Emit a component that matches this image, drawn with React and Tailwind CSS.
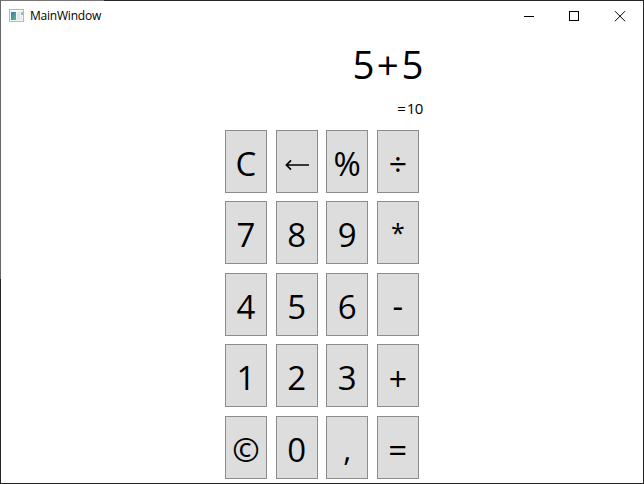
const ROWS = [
  ['C', '←', '%', '÷'],
  ['7', '8', '9', '*'],
  ['4', '5', '6', '-'],
  ['1', '2', '3', '+'],
  ['©', '0', ',', '='],
];

// Optical corrections for glyphs whose shape differs from the digits
const ADJUST = {
  '*': 'text-[25px] -mt-[2px]',
  '÷': 'text-[32px]',
  '-': 'mt-[-1px]',
  '+': 'text-[32px] mt-[1px]',
  ',': 'text-[31px]',
};

function ArrowLeft() {
  return (
    <svg className="mt-[2px]" width="24" height="14" viewBox="0 0 24 14" fill="none" stroke="#000" strokeWidth="1.7">
      <path d="M1.2 7H24M6 2.4L1.4 7L6 11.6" />
    </svg>
  );
}

function Key({ label }) {
  return (
    <button className="flex h-[63px] w-[42px] justify-center border border-[#8c8c8c] bg-[#dddddd] pt-[10px] text-[33px] leading-[45px] text-black">
      {label === '←' ? <span className="flex h-[45px] items-center"><ArrowLeft /></span> : <span className={ADJUST[label]}>{label}</span>}
    </button>
  );
}

function TitleBar() {
  return (
    <header className="flex h-[30px] items-center justify-between">
      <div className="flex items-center">
        <svg className="-mt-[2px] ml-[8px]" width="15" height="13" viewBox="0 0 15 13">
          <rect x=".5" y=".5" width="14" height="12" fill="#f4f5f6" stroke="#b4b9bd" />
          <rect x="2" y="3" width="5" height="8" fill="#4f95a0" />
          <path d="M2 3h4l-4 5z" fill="#4a7fb5" />
          <path d="M7 5v6H3z" fill="#58aa86" />
          <rect x="8" y="3" width="3" height="8" fill="#e2e5e7" />
          <rect x="12" y="3" width="2" height="3" fill="#8fc3a6" />
          <rect x="12" y="7" width="1" height="4" fill="#dde3e4" />
        </svg>
        <span className="ml-[6px] text-[12px] leading-4 tracking-[-0.22px]">MainWindow</span>
      </div>
      <div className="-mr-[1px] flex">
        <svg width="46" height="29" fill="none" stroke="#000" shapeRendering="crispEdges"><path d="M18 14.5h10" /></svg>
        <svg width="46" height="29" fill="none" stroke="#000" shapeRendering="crispEdges"><rect x="17.5" y="9.5" width="9" height="9" /></svg>
        <svg width="46" height="29" fill="none" stroke="#000"><path d="M17 9.2l10 10M27 9.2l-10 10" /></svg>
      </div>
    </header>
  );
}

// Lighter stretch of the translucent window frame at the top left corner
function FrameTint() {
  return (
    <>
      <div className="absolute -top-px -left-px h-px w-[104px] bg-[#767476]" />
      <div className="absolute -top-px -left-px h-[279px] w-px bg-[#66676a]" />
    </>
  );
}

export default function App() {
  return (
    <div className="relative flex h-[484px] w-[644px] flex-col border border-[#232323] bg-white font-['Open_Sans','Noto_Sans',sans-serif] text-black">
      <FrameTint />
      <TitleBar />
      <main className="ml-[224px] w-[198px]">
        <div className="mt-[6px] flex h-[54px] justify-end text-[38.5px] leading-[54px]">
          <span className="w-[21.5px] text-center">5</span>
          <span className="w-[27.4px] text-center">+</span>
          <span className="w-[21.5px] text-center">5</span>
        </div>
        <div className="mt-[7px] flex h-[20px] justify-end text-[15px] leading-[20px]">
          <span className="w-[10px] text-center">=</span>
          <span className="tracking-[-0.4px]">10</span>
        </div>
        <div className="mt-[12px] flex flex-col gap-[8.4px]">
          {ROWS.map((row) => (
            <div key={row[0]} className="flex gap-[8.6px]">
              {row.map((k) => <Key key={k} label={k} />)}
            </div>
          ))}
        </div>
      </main>
    </div>
  );
}
